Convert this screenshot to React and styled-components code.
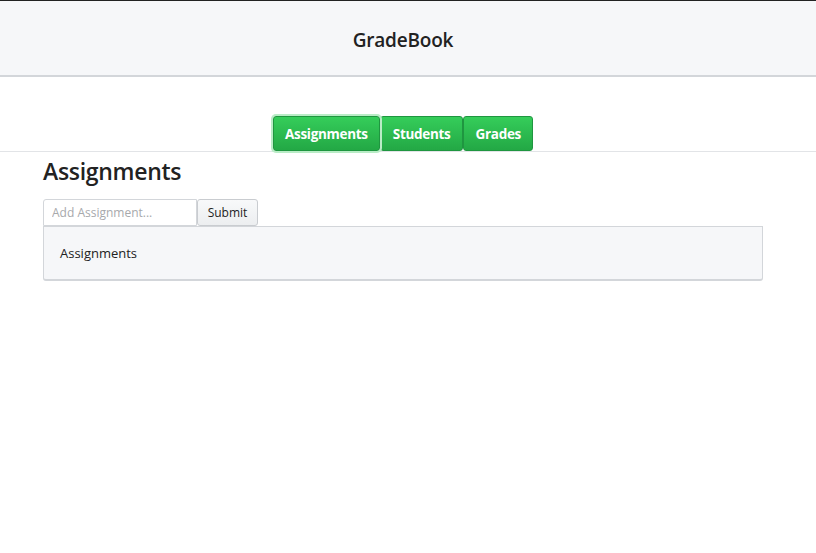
import React, { useState } from "react";
import styled, { createGlobalStyle } from "styled-components";

//----------- estilos ------------

const GlobalStyle = createGlobalStyle`
  body {
    margin: 0;
    background: #ffffff;
    font-family: "Open Sans", "Noto Sans", sans-serif;
    color: #212529;
  }
`;

const Header = styled.header`
  box-sizing: border-box;
  height: 77px;
  padding: 4px 10px 0 0;
  border-top: 1px solid #222;
  border-bottom: 2px solid #d3d6da;
  background: #f6f7f9;
  display: flex;
  align-items: center;
  justify-content: center;
`;

const Title = styled.h1`
  margin: 0;
  font-size: 19px;
  font-weight: 600;
  letter-spacing: -0.2px;
  color: #222;
`;

const TabBar = styled.nav`
  margin-top: 39px;
  padding-right: 10px;
  display: flex;
  justify-content: center;
  border-bottom: 1px solid #e2e4e7;
`;

const Tab = styled.button`
  height: 35px;
  padding: 0 ${(p) => p.$pad}px;
  border: 1px solid #1f9640;
  border-radius: 3px;
  background: linear-gradient(#35cd5a, #23a845);
  color: #fff;
  font-family: inherit;
  font-size: 13.5px;
  font-weight: 700;
  letter-spacing: -0.3px;
  cursor: pointer;
  box-shadow: ${(p) => (p.$active ? "0 0 0 2px #b9ecc6" : "none")};
  position: relative;
  z-index: ${(p) => (p.$active ? 1 : 0)};
`;

const Content = styled.div`
  padding-right: 10px;
`;

const Container = styled.main`
  width: 720px;
  margin: 0 auto;
`;

const Heading = styled.h2`
  margin: 4px 0 13px;
  font-size: 23px;
  font-weight: 600;
  letter-spacing: -0.3px;
  line-height: 30px;
  color: #222;
`;

const Form = styled.form`
  display: flex;
`;

const Input = styled.input`
  box-sizing: border-box;
  width: 154px;
  height: 27px;
  padding: 0 8px;
  border: 1px solid #d3d6da;
  border-radius: 3px 0 0 0;
  font-family: inherit;
  font-size: 12px;
  color: #333;
  outline: none;

  &::placeholder {
    color: #a7a9ac;
  }
`;

const SubmitButton = styled.button`
  box-sizing: border-box;
  width: 61px;
  height: 27px;
  border: 1px solid #c9ccd0;
  border-radius: 3px;
  background: linear-gradient(#f8f9fa, #eceef0);
  font-family: inherit;
  font-size: 12px;
  font-weight: 500;
  color: #222;
`;

const Card = styled.div`
  box-sizing: border-box;
  height: 55px;
  padding: 0 16px 0 16px;
  display: flex;
  align-items: center;
  background: #f6f7f9;
  border: 1px solid #d3d6da;
  border-bottom-width: 2px;
  border-radius: 0 0 3px 3px;
  font-size: 13px;
  color: #222;
`;

//-------------- componente -------------------

const tabs = [
  { label: "Assignments", pad: 11 },
  { label: "Students", pad: 12 },
  { label: "Grades", pad: 11 },
];

export default function App() {
  const [active, setActive] = useState("Assignments");

  return (
    <>
      <GlobalStyle />
      <Header>
        <Title>GradeBook</Title>
      </Header>
      <TabBar>
        {tabs.map((t) => (
          <Tab
            key={t.label}
            $pad={t.pad}
            $active={active === t.label}
            onClick={() => setActive(t.label)}
          >
            {t.label}
          </Tab>
        ))}
      </TabBar>
      <Content>
        <Container>
          <Heading>Assignments</Heading>
          <Form onSubmit={(e) => e.preventDefault()}>
            <Input placeholder="Add Assignment..." />
            <SubmitButton type="submit">Submit</SubmitButton>
          </Form>
          <Card>Assignments</Card>
        </Container>
      </Content>
    </>
  );
}
